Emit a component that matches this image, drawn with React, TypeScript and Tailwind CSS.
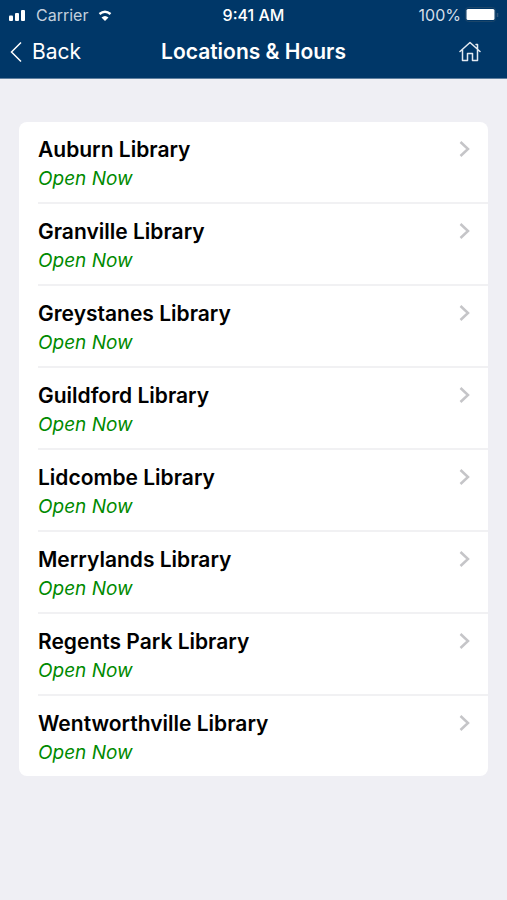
const libraries = [
  'Auburn Library',
  'Granville Library',
  'Greystanes Library',
  'Guildford Library',
  'Lidcombe Library',
  'Merrylands Library',
  'Regents Park Library',
  'Wentworthville Library',
];

function StatusBar() {
  return (
    <div className="grid grid-cols-[1fr_auto_1fr] items-center h-[30px] px-2 text-base">
      <div className="flex items-center gap-2 text-[#c3d0de]">
        <svg width="20" height="12" viewBox="0 0 20 12" fill="white" aria-hidden="true">
          <rect x="1" y="6.500" width="4" height="5.500" rx="1" />
          <rect x="7" y="4" width="4" height="8" rx="1" />
          <rect x="13" y="1" width="4" height="11" rx="1" />
        </svg>
        <span>Carrier</span>
        <svg className="ml-0.5" width="14" height="12" viewBox="0 0 14 12" fill="none" stroke="white" strokeWidth="2.500" aria-hidden="true">
          <path d="M1.500 5Q7 0.500 12.500 5" />
          <path d="M3.500 8.500Q7 5.500 10.500 8.500L7 12Z" fill="white" stroke="none" />
        </svg>
      </div>
      <div className="text-center font-medium">9:41 AM</div>
      <div className="flex items-center justify-end gap-1 text-[#d5dee8]">
        <span>100%</span>
        <svg width="34" height="16" viewBox="0 0 34 16" aria-hidden="true">
          <rect x="0.500" y="0.500" width="30" height="14" rx="3" fill="none" stroke="#1c4669" />
          <rect x="1.500" y="2" width="28" height="11" rx="1.500" fill="white" />
          <path d="M32.500 6v4" stroke="#2f557b" strokeWidth="1.500" />
        </svg>
      </div>
    </div>
  );
}

export default function App() {
  return (
    <div className="min-h-screen bg-[#efeff4] font-['Inter','Liberation_Sans',sans-serif]">
      <header className="bg-[#003768] text-white border-b border-[#5f7f9f]">
        <StatusBar />
        <div className="grid grid-cols-[1fr_auto_1fr] items-center h-12 pb-1 px-2">
          <button type="button" className="flex items-center gap-2 text-[21px] justify-self-start">
            <svg width="16" height="22" viewBox="0 0 16 22" fill="none" stroke="white" strokeWidth="1.500" aria-hidden="true">
              <path d="M13 1.500L3.500 11L13 20.500" />
            </svg>
            Back
          </button>
          <h1 className="text-[21px] font-semibold">Locations &amp; Hours</h1>
          <button type="button" aria-label="Home" className="justify-self-end mr-[18px]">
            <svg width="22" height="22" viewBox="0 0 22 22" fill="none" stroke="#e3eaf1" strokeWidth="1.500" strokeLinejoin="round" strokeLinecap="round" aria-hidden="true">
              <path d="M1 10.500L11 1.500L21 10.500M3.500 9V19.500H8.500V12.500H13.500V19.500H18.500V9M18.500 8V3.500H17" />
            </svg>
          </button>
        </div>
      </header>

      <main className="px-[19px] pt-[43px]">
        <ul className="bg-white rounded-lg overflow-hidden">
          {libraries.map((name) => (
            <li key={name} className="group pl-[19px]">
              <a href="#" className="flex items-start justify-between h-[82px] group-last:h-20 pt-3 pr-[18px] border-b-2 border-[#f1f1f3] group-last:border-0">
                <div>
                  <h2 className="text-[21px] leading-8 font-semibold text-black">{name}</h2>
                  <p className="text-[19px] leading-[26px] italic text-[#008a00]">Open Now</p>
                </div>
                <svg className="mt-[7px]" width="11" height="16" viewBox="0 0 11 16" fill="none" stroke="#c5c5c8" strokeWidth="2.500" aria-hidden="true">
                  <path d="M1.500 1L9 8L1.500 15" />
                </svg>
              </a>
            </li>
          ))}
        </ul>
      </main>
    </div>
  );
}
